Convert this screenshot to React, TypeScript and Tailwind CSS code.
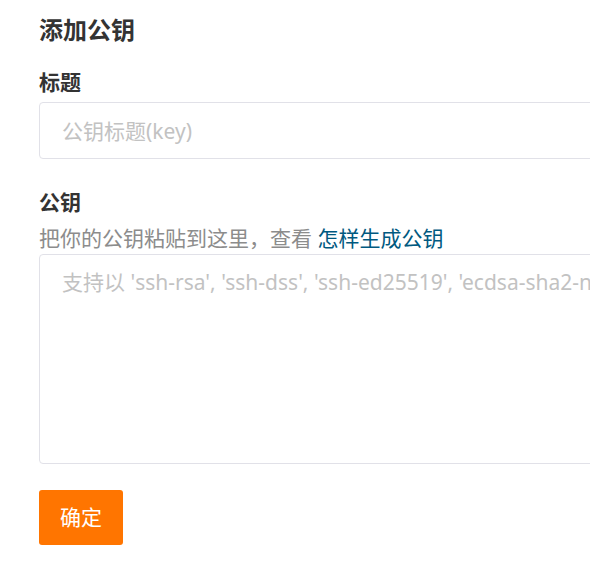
export default function App() {
  return (
    <div className="w-[590px] h-[568px] overflow-hidden bg-white font-['Noto_Sans','Noto_Sans_CJK_SC',sans-serif]">
      <div className="w-[1500px] pl-[39px] pt-[12px]">
        <h3 className="text-[24px] leading-[36px] font-bold text-[#333]">添加公钥</h3>

        <div className="mt-[19px] flex flex-col">
          <label className="text-[21px] leading-[30px] font-bold text-[#333]">标题</label>
          <input
            className="mt-[5px] h-[57px] w-full rounded-[4px] border border-[#e1e1e8] px-[22px] text-[21px] text-[#333] outline-none placeholder:text-[#c2c2c2]"
            placeholder="公钥标题(key)"
          />
        </div>

        <div className="mt-[28px] flex flex-col">
          <label className="text-[21px] leading-[30px] font-bold text-[#333]">公钥</label>
          <p className="mt-[6px] text-[21px] leading-[30px] text-[#8c8c8c]">
            把你的公钥粘贴到这里，查看 <a className="text-[#005980]">怎样生成公钥</a>
          </p>
          <textarea
            className="mt-[1px] h-[210px] w-full resize-none rounded-[4px] border border-[#e1e1e8] px-[22px] py-[12px] text-[21px] leading-[30px] text-[#333] outline-none placeholder:text-[#c2c2c2]"
            placeholder="支持以 'ssh-rsa', 'ssh-dss', 'ssh-ed25519', 'ecdsa-sha2-nistp256', 'ecdsa-sha2-nistp384' 或 'ecdsa-sha2-nistp521' 开头"
          />
        </div>

        <button className="mt-[26px] h-[55px] w-[84px] rounded-[3px] bg-[#ff7500] text-[21px] text-white">
          确定
        </button>
      </div>
    </div>
  );
}
